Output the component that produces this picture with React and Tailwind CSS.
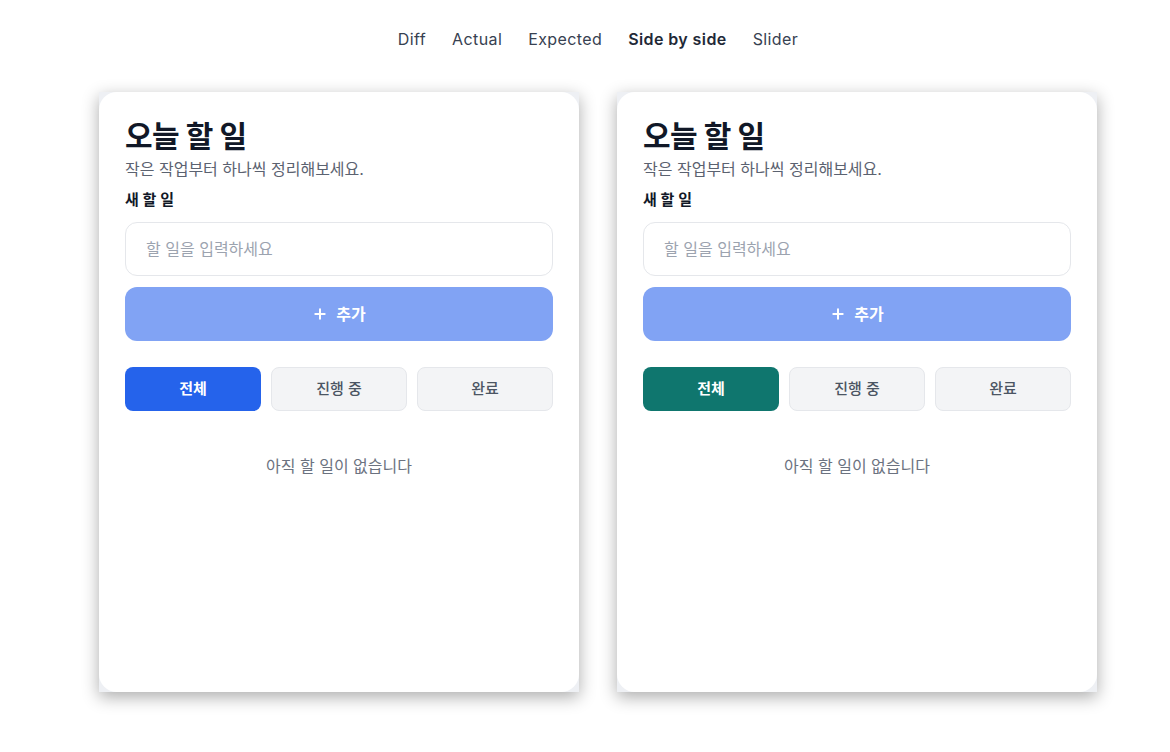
import { Plus } from 'lucide-react';

const ko = { fontFamily: 'Inter, "Noto Sans CJK KR", sans-serif' };

function TodoCard({ activeClass }) {
  const filters = ['전체', '진행 중', '완료'];

  return (
    <div className="w-[480px] h-[600px] bg-[#eef0f4] shadow-[0_5px_16px_rgba(0,0,0,0.33)]">
      <div className="w-full h-full bg-white rounded-[18px] px-[26px] pt-[26px]" style={ko}>
        <h1 className="text-[30px] leading-[36px] font-bold text-[#111827] tracking-[-0.5px]">오늘 할 일</h1>
        <p className="mt-[3px] text-[16px] leading-[24px] text-[#5b6270]">작은 작업부터 하나씩 정리해보세요.</p>

        <label className="block mt-[7px] text-[15px] leading-[24px] font-semibold text-[#111827]">새 할 일</label>
        <input
          className="mt-[10px] w-full h-[54px] rounded-xl border border-[#e5e7eb] px-[20px] text-[16px] outline-none placeholder:text-[#9ca3af]"
          placeholder="할 일을 입력하세요"
        />
        <button className="mt-[11px] w-full h-[54px] rounded-xl bg-[#81a3f4] text-white text-[16px] font-semibold flex items-center justify-center gap-[8px]">
          <Plus size={16} strokeWidth={3} />
          추가
        </button>

        {/* Filters */}
        <div className="mt-[26px] grid grid-cols-3 gap-[10px]">
          {filters.map((f, i) => (
            <button
              key={f}
              className={
                i === 0
                  ? `h-[44px] rounded-lg text-[15px] font-bold text-white ${activeClass}`
                  : 'h-[44px] rounded-lg text-[15px] font-medium text-[#4b5563] bg-[#f3f4f6] border border-[#e5e7eb]'
              }
            >
              {f}
            </button>
          ))}
        </div>

        <p className="mt-[43px] text-center text-[16px] leading-[24px] text-[#6b7280]">아직 할 일이 없습니다</p>
      </div>
    </div>
  );
}

export default function App() {
  const tabs = ['Diff', 'Actual', 'Expected', 'Side by side', 'Slider'];

  return (
    <div className="w-full h-[752px] bg-white pl-[26px]" style={{ fontFamily: 'Inter, sans-serif' }}>
      <div className="flex justify-center gap-[26px] pt-[27px] text-[16px] leading-[24px] tracking-[0.4px] text-[#374151]">
        {tabs.map((t) => (
          <span key={t} className={t === 'Side by side' ? 'font-semibold text-[#1f2937]' : ''}>
            {t}
          </span>
        ))}
      </div>

      <div className="flex justify-center gap-[38px] mt-[41px]">
        <TodoCard activeClass="bg-[#2563eb]" />
        <TodoCard activeClass="bg-[#0f766e]" />
      </div>
    </div>
  );
}
